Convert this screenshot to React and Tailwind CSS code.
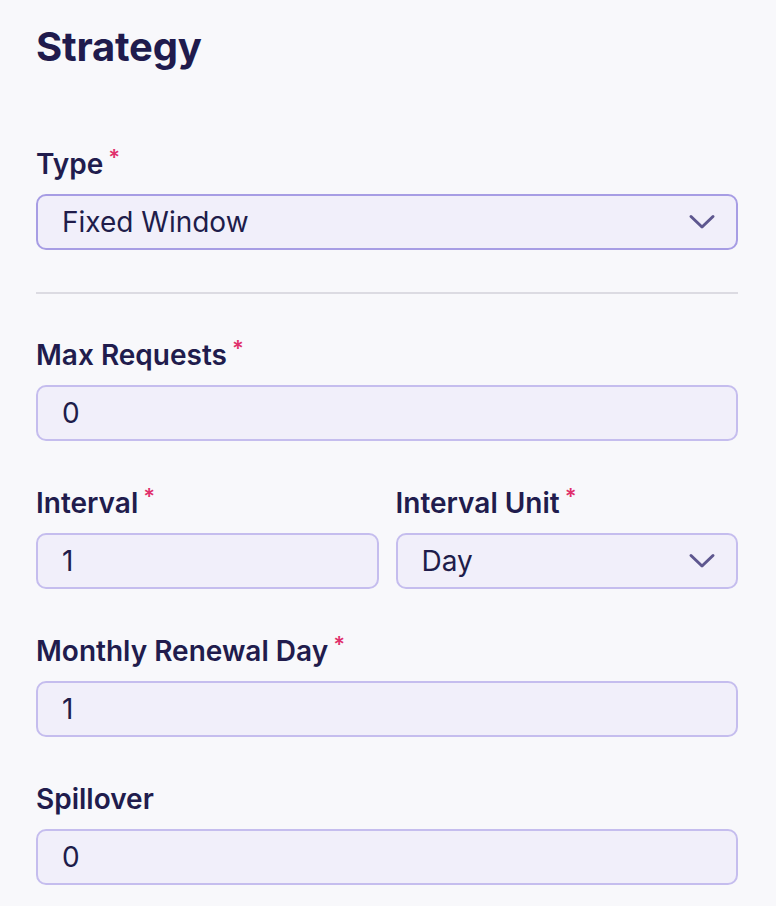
import React from "react";

const font = { fontFamily: "Inter, 'Noto Sans', sans-serif" };

function Label({ children, required }) {
  return (
    <div className="flex items-start h-[42px] mb-[9px] text-[28px] leading-[42px] font-semibold text-[#211c4d]">
      <span>{children}</span>
      {required && (
        <span className="ml-[5px] text-[22px] leading-[22px] mt-[3px] text-[#e0306b] font-semibold">*</span>
      )}
    </div>
  );
}

function Chevron() {
  return (
    <svg width="28" height="18" viewBox="0 0 28 18" fill="none" className="shrink-0">
      <path d="M3 3.5 L14 14 L25 3.5" stroke="#5e578f" strokeWidth="3" strokeLinecap="round" strokeLinejoin="round" />
    </svg>
  );
}

function Box({ value, select, strong }) {
  return (
    <div
      className={
        "flex items-center justify-between h-[56px] rounded-[10px] border-2 bg-[#f1effa] pl-[24px] pr-[20px] text-[28px] text-[#201c4a] " +
        (strong ? "border-[#a79de4]" : "border-[#c5bdee]")
      }
    >
      <span>{value}</span>
      {select && <Chevron />}
    </div>
  );
}

export default function App() {
  return (
    <div style={font} className="min-h-[906px] bg-[#f8f8fb] pl-[36px] pr-[38px] pt-[23px]">
      <h1 className="text-[40px] leading-[48px] font-bold text-[#201b4d] tracking-[-0.2px]">Strategy</h1>
      <div className="mt-[72px]">
        <Label required>Type</Label>
        <Box value="Fixed Window" select strong />
      </div>
      <div className="mt-[42px] mb-[40px] h-[2px] bg-[#dcdbe2]" />
      <div>
        <Label required>Max Requests</Label>
        <Box value="0" />
      </div>
      <div className="mt-[41px] grid grid-cols-2 gap-x-[17px]">
        <div>
          <Label required>Interval</Label>
          <Box value="1" />
        </div>
        <div>
          <Label required>Interval Unit</Label>
          <Box value="Day" select />
        </div>
      </div>
      <div className="mt-[41px]">
        <Label required>Monthly Renewal Day</Label>
        <Box value="1" />
      </div>
      <div className="mt-[41px]">
        <Label>Spillover</Label>
        <Box value="0" />
      </div>
    </div>
  );
}
